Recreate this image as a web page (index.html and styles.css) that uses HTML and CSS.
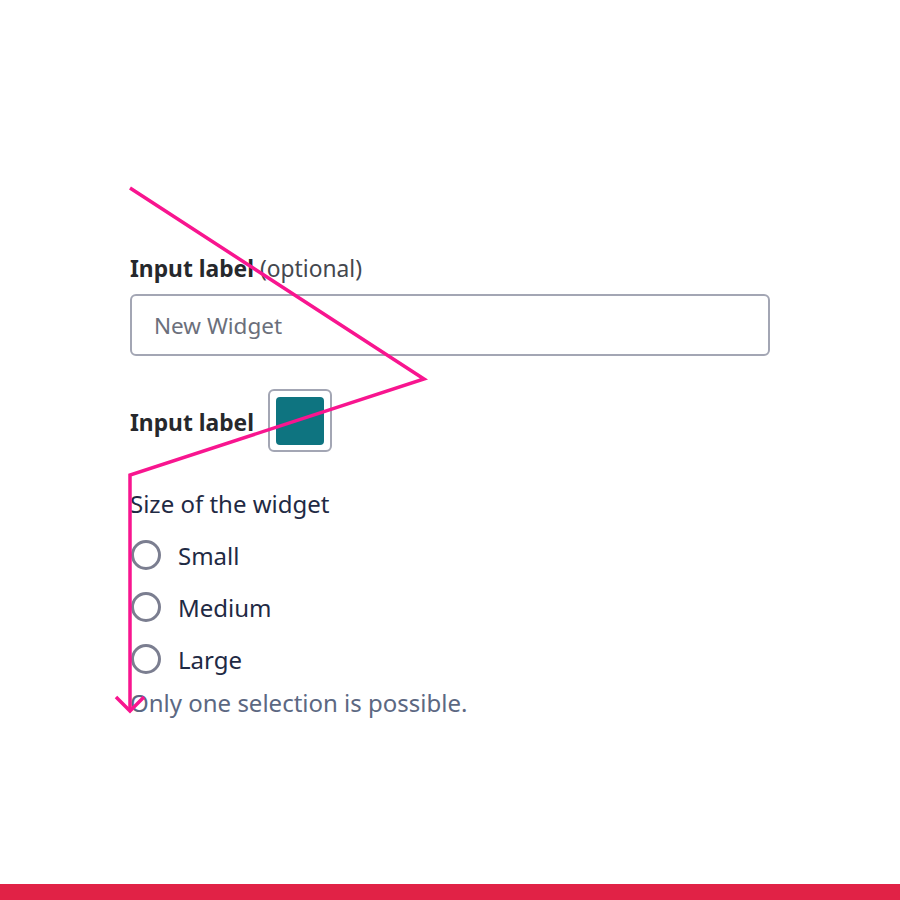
FILE: index.html
```html
<!DOCTYPE html>
<html lang="en">
<head>
<meta charset="utf-8">
<title>Widget form</title>
<link rel="stylesheet" href="styles.css">
</head>
<body>
<div class="page">
  <main class="form">
    <div class="field">
      <label class="label" for="name"><strong>Input label</strong> <span class="optional">(optional)</span></label>
      <input class="text-input" id="name" type="text" placeholder="New Widget">
    </div>
    <div class="color-row">
      <span class="label-bold">Input label</span>
      <span class="swatch"><span class="swatch-fill"></span></span>
    </div>
    <div class="radios" role="radiogroup" aria-labelledby="size-legend">
      <div class="legend" id="size-legend">Size of the widget</div>
      <label class="radio"><span class="circle"></span><span>Small</span></label>
      <label class="radio"><span class="circle"></span><span>Medium</span></label>
      <label class="radio"><span class="circle"></span><span>Large</span></label>
    </div>
    <p class="help">Only one selection is possible.</p>
  </main>
  <div class="bar"></div>
  <svg class="annotation" width="900" height="900" viewBox="0 0 900 900">
    <polyline points="130,188 424,379 130,475 130,711" fill="none" stroke="#f8158f" stroke-width="3.5" stroke-linejoin="miter"/>
    <polyline points="116,697 130,711 144,697" fill="none" stroke="#f8158f" stroke-width="3.5"/>
  </svg>
</div>
</body>
</html>
```
FILE: styles.css
```css
* { box-sizing: border-box; }
html, body { margin: 0; padding: 0; background: #ffffff; }
body { font-family: "Noto Sans", "Open Sans", sans-serif; font-size: 24px; line-height: 33px; }
.page { position: relative; width: 900px; height: 900px; display: flex; flex-direction: column; }
.form { flex: 1; padding: 252px 130px 0 130px; }
.field { display: flex; flex-direction: column; width: 640px; }
.label { color: #44474e; margin-bottom: 9px; font-size: 22.8px; }
.label strong { color: #26282c; font-weight: 700; }
.text-input {
  width: 640px; height: 62px; border: 2px solid #a3a6b4; border-radius: 6px;
  padding: 0 22px; font-family: inherit; font-size: 22.5px; color: #26282c; background: #fff;
}
.text-input::placeholder { color: #6b6f7b; }
.color-row { display: flex; align-items: center; gap: 14px; margin-top: 33px; }
.label-bold { font-weight: 700; color: #26282c; font-size: 22.8px; padding-top: 3px; }
.swatch {
  width: 64px; height: 63px; border: 2px solid #a3a6b4; border-radius: 6px;
  display: flex; align-items: center; justify-content: center;
}
.swatch-fill { width: 48px; height: 48px; background: #0e7480; border-radius: 4px; }
.radios { margin-top: 35px; display: flex; flex-direction: column; gap: 22px; }
.legend { color: #1f2a44; margin-bottom: -2px; }
.radio { display: flex; align-items: center; gap: 17px; height: 30px; color: #1f2a44; margin-left: 1px; }
.circle { width: 30px; height: 30px; border: 3px solid #7b7e90; border-radius: 50%; flex: none; }
.help { margin: 12px 0 0 0; color: #5c6882; }
.bar { height: 16px; background: #e12246; flex: none; }
.annotation { position: absolute; left: 0; top: 0; pointer-events: none; }
```
